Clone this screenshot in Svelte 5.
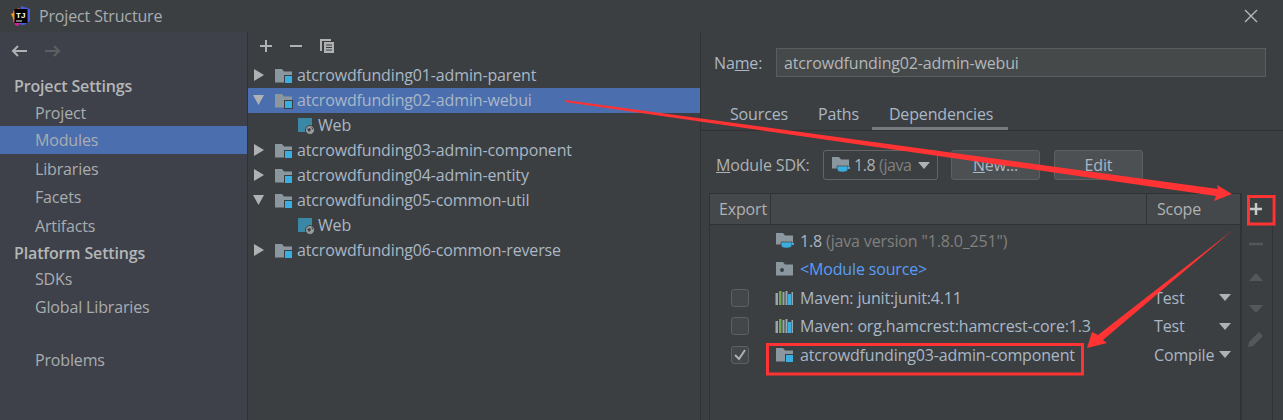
<script>
  const sidebar = [
    { t: 'Project Settings', h: 1, ht: 26, gap: 5 },
    { t: 'Project', ht: 27 },
    { t: 'Modules', sel: 1, ht: 28 },
    { t: 'Libraries', ht: 29 },
    { t: 'Facets', ht: 28 },
    { t: 'Artifacts', ht: 29 },
    { t: 'Platform Settings', h: 1, ht: 25 },
    { t: 'SDKs', ht: 28 },
    { t: 'Global Libraries', ht: 28 },
    { t: 'Problems', ht: 28, gap: 25 }
  ];
  const tree = [
    { t: 'atcrowdfunding01-admin-parent', a: 'r' },
    { t: 'atcrowdfunding02-admin-webui', a: 'd', sel: 1 },
    { t: 'Web', web: 1 },
    { t: 'atcrowdfunding03-admin-component', a: 'r' },
    { t: 'atcrowdfunding04-admin-entity', a: 'r' },
    { t: 'atcrowdfunding05-common-util', a: 'd' },
    { t: 'Web', web: 1 },
    { t: 'atcrowdfunding06-common-reverse', a: 'r' }
  ];
</script>

{#snippet folder()}
  <svg class="ic" width="20" height="18" viewBox="0 0 20 18">
    <path d="M1 2h7l2 2.500h8v11H1z" fill="#8a979f"/>
    <rect x="10.500" y="8.500" width="8" height="8" fill="#3aaee0" stroke="#3c3f41" stroke-width="1"/>
  </svg>
{/snippet}
{#snippet sdk()}
  <svg class="ic" width="20" height="18" viewBox="0 0 20 18">
    <path d="M1 1h7l2 2.500h8v9H1z" fill="#8a979f"/>
    <path d="M6 10h11v2.500q0 3.500-4 3.500h-3q-4 0-4-3.500z" fill="#3aaee0" stroke="#3c3f41" stroke-width=".7"/>
    <path d="M17 11h2v2h-2z" fill="#3aaee0"/>
  </svg>
{/snippet}
{#snippet maven()}
  <svg class="ic" width="20" height="18" viewBox="0 0 20 18">
    <rect x="0.500" y="4" width="2.500" height="12" fill="#9aa5aa"/>
    <rect x="4" y="2" width="2.500" height="14" fill="#6ba84f"/>
    <rect x="7.500" y="3" width="2" height="13" fill="#9aa5aa"/>
    <rect x="10.500" y="2" width="2" height="14" fill="#9aa5aa"/>
    <rect x="13" y="5" width="3" height="11" fill="#3aaee0"/>
    <rect x="16.500" y="3" width="1.500" height="13" fill="#9aa5aa"/>
  </svg>
{/snippet}
{#snippet caret()}
  <svg class="caret" width="12" height="7" viewBox="0 0 12 7"><path d="M0 0h12L6 7z" fill="#afb1b3"/></svg>
{/snippet}

<div class="win">
  <header class="title">
    <svg width="22" height="22" viewBox="0 0 22 22">
      <path d="M3 6l6-3 3 3-4 13-5-2z" fill="#f0503a"/>
      <path d="M11 1l9 3v12l-6 4-6-1z" fill="#4a5ae0"/>
      <path d="M1 9l4-2 3 8-3 2z" fill="#f89a1c"/>
      <path d="M4 15l7 2-3 4-3-1z" fill="#d81e8e"/>
      <rect x="4.500" y="4" width="13" height="14" fill="#000"/>
      <rect x="6" y="15.500" width="6" height="1" fill="#eee"/>
      <text x="6" y="12.500" class="tj">TJ</text>
    </svg>
    <span>Project Structure</span>
    <svg class="close" width="14" height="14" viewBox="0 0 14 14"><path d="M1 1l12 12M13 1L1 13" stroke="#b9bcbe" stroke-width="1.300"/></svg>
  </header>
  <div class="main">
    <nav class="side">
      <div class="hist">
        <svg width="17" height="12" viewBox="0 0 17 12"><path d="M16 6H2M7 1L2 6l5 5" fill="none" stroke="#afb1b3" stroke-width="2"/></svg>
        <svg width="17" height="12" viewBox="0 0 17 12"><path d="M1 6h14M10 1l5 5-5 5" fill="none" stroke="#5d6063" stroke-width="2"/></svg>
      </div>
      {#each sidebar as s}
        <div class="item" class:head={s.h} class:sel={s.sel} style="height:{s.ht}px;margin-top:{s.gap || 0}px">{s.t}</div>
      {/each}
    </nav>
    <section class="tree">
      <div class="tools">
        <svg width="14" height="14" viewBox="0 0 14 14"><path d="M7 1v12M1 7h12" stroke="#afb1b3" stroke-width="2"/></svg>
        <svg width="14" height="14" viewBox="0 0 14 14"><path d="M1 7h12" stroke="#afb1b3" stroke-width="2"/></svg>
        <svg width="16" height="16" viewBox="0 0 16 16"><path d="M1 1h11v2H3v10H1z" fill="#afb1b3"/><path d="M5 4h10v11H5z" fill="#afb1b3"/><path d="M7 7h6M7 9.500h6M7 12h6" stroke="#3c3f41"/></svg>
      </div>
      {#each tree as n}
        <div class="node" class:sel={n.sel} class:web={n.web}>
          {#if n.a === 'r'}
            <svg class="ar" width="12" height="14" viewBox="0 0 12 14"><path d="M1 1l10 6-10 6z" fill="#afb1b3"/></svg>
          {:else if n.a === 'd'}
            <svg class="ar" width="12" height="14" viewBox="0 0 12 14"><path d="M0 2h11L5.500 12z" fill="#afb1b3"/></svg>
          {/if}
          {#if n.web}
            <svg class="ic" width="18" height="18" viewBox="0 0 18 18">
              <rect x="1" y="1" width="14" height="14" fill="#3a87a6"/>
              <circle cx="13" cy="13" r="4.500" fill="#9a9da0" stroke="#3c3f41"/>
              <path d="M10 12l3-1 1 2-2 2zM14 10l2 1v2z" fill="#3c3f41"/>
            </svg>
          {:else}
            {@render folder()}
          {/if}
          <span>{n.t}</span>
        </div>
      {/each}
    </section>
    <section class="detail">
      <div class="name">
        <label for="mod">Na<u>m</u>e:</label>
        <input id="mod" value="atcrowdfunding02-admin-webui" />
      </div>
      <div class="tabs">
        <span class="t1">Sources</span><span class="t2">Paths</span><span class="on">Dependencies</span>
      </div>
      <div class="sdk">
        <span class="lbl"><u>M</u>odule SDK:</span>
        <div class="combo">{@render sdk()}<span class="v">1.8 <i>(java</i></span>{@render caret()}</div>
        <button class="new"><u>N</u>ew...</button>
        <button class="edit">Edit</button>
      </div>
      <div class="deps">
        <div class="table">
          <div class="thead"><span class="c1">Export</span><span class="c2"></span><span class="c3">Scope</span></div>
          <div class="row"><span class="chk none"></span>{@render sdk()}<span class="txt">1.8 <i>(java version "1.8.0_251")</i></span></div>
          <div class="row"><span class="chk none"></span>
            <svg class="ic" width="20" height="18" viewBox="0 0 20 18"><path d="M1 2h7l2 2.500h8v11H1z" fill="#8a979f"/><circle cx="7" cy="10" r="2" fill="#3c3f41"/></svg>
            <span class="txt link">&lt;Module source&gt;</span></div>
          <div class="row"><span class="chk"></span>{@render maven()}<span class="txt">Maven: junit:junit:4.11</span><span class="scope">Test</span>{@render caret()}</div>
          <div class="row"><span class="chk"></span>{@render maven()}<span class="txt">Maven: org.hamcrest:hamcrest-core:1.3</span><span class="scope">Test</span>{@render caret()}</div>
          <div class="row"><span class="chk on"><svg width="14" height="12" viewBox="0 0 14 12"><path d="M2 6l4 4 6-9" fill="none" stroke="#afb1b3" stroke-width="2"/></svg></span>{@render folder()}<span class="txt">atcrowdfunding03-admin-component</span><span class="scope">Compile</span>{@render caret()}</div>
        </div>
        <div class="acts">
          <svg width="16" height="16" viewBox="0 0 16 16"><path d="M8 2v12M2 8h12" stroke="#c6c8c9" stroke-width="2.500"/></svg>
          <svg width="14" height="4" viewBox="0 0 14 4"><path d="M0 2h14" stroke="#55585a" stroke-width="2.500"/></svg>
          <svg width="14" height="8" viewBox="0 0 14 8"><path d="M7 0l7 8H0z" fill="#55585a"/></svg>
          <svg width="14" height="8" viewBox="0 0 14 8"><path d="M0 0h14L7 8z" fill="#55585a"/></svg>
          <svg width="18" height="18" viewBox="0 0 18 18"><path d="M1 17l1-5L12 2l4 4L6 16z" fill="#55585a"/></svg>
        </div>
      </div>
    </section>
  </div>
  <svg class="over" width="1283" height="420" viewBox="0 0 1283 420">
    <path d="M565 100L1218 189 1217 185 1232 194 1214 201 1216 196 565 102z" fill="#f33"/>
    <path d="M1233 230L1098 335 1092 332 1087 348 1107 343 1103 340z" fill="#f33"/>
    <rect x="1248.500" y="196.500" width="25.500" height="27.500" fill="none" stroke="#f33" stroke-width="3"/>
    <rect x="767.500" y="344.500" width="315" height="29.500" fill="none" stroke="#f33" stroke-width="3"/>
  </svg>
</div>

<style>
  :global(body) { margin: 0; background: #3c3f41; }
  .win {
    position: relative; width: 1283px; height: 420px; overflow: hidden;
    background: #3c3f41; color: #afb1b3;
    font: 16px "Open Sans", "Noto Sans", sans-serif;
    letter-spacing: -0.15px;
  }
  .title { height: 32px; display: flex; align-items: center; padding-left: 10px; gap: 7px; box-sizing: border-box; }
  .title span { flex: 1; color: #a9adb0; }
  .tj { font: bold 8px "Liberation Sans", sans-serif; fill: #fff; letter-spacing: 0; }
  .close { margin-right: 25px; }
  .main { display: flex; height: 388px; }
  .side { width: 247px; flex: none; background: #3e4149; border-right: 1px solid #323232; }
  .hist { height: 36px; display: flex; align-items: center; gap: 16px; padding: 2px 0 0 11px; box-sizing: border-box; }
  .item { display: flex; align-items: center; padding-left: 35px; color: #a9adb0; }
  .item.head { padding-left: 14px; font-weight: 600; color: #b4b6b8; }
  .item.sel { background: #4b6eaf; }
  .tree { width: 452px; flex: none; border-right: 1px solid #323232; }
  .tools { height: 30px; display: flex; align-items: center; gap: 16px; padding: 0 0 2px 11px; box-sizing: border-box; margin-bottom: 1px; }
  .node { height: 25px; display: flex; align-items: center; padding-left: 26px; position: relative; color: #a9b7c6; }
  .node span { position: relative; top: -1px; }
  .node.sel { background: #4b6eaf; }
  .node.web { padding-left: 49px; }
  .node .ic { margin-right: 3px; }
  .ar { position: absolute; left: 5px; top: 5px; }
  .detail { flex: 1; padding: 16px 0 0 13px; min-width: 0; display: flex; flex-direction: column; }
  .name { display: flex; align-items: center; height: 29px; padding-right: 17px; }
  .name label { width: 62px; color: #a9b7c6; }
  input {
    flex: 1; min-width: 0; height: 29px; box-sizing: border-box; padding: 0 7px;
    background: #45494a; border: 1px solid #5a5d5f; color: #b4b7b9; font: inherit; letter-spacing: inherit; outline: none;
  }
  .tabs { height: 31px; margin: 22px 0 0 -13px; display: flex; align-items: flex-start; padding-left: 14px; border-bottom: 1px solid #323232; box-sizing: content-box; }
  .tabs span { padding: 4px 15px 0; height: 24px; color: #a9b7c6; }
  .tabs .t2 { padding-right: 13px; }
  .tabs .on { border-bottom: 3px solid #747a80; height: 24px; padding-left: 17px; }
  .sdk { display: flex; align-items: center; height: 30px; margin: 19px 0 0 2px; }
  .lbl { width: 107px; flex: none; }
  .combo {
    width: 115px; height: 30px; box-sizing: border-box; border: 1px solid #646464; border-radius: 3px;
    display: flex; align-items: center; padding-left: 7px; gap: 3px; overflow: hidden; flex: none;
  }
  .combo .v { white-space: nowrap; letter-spacing: -0.4px; }
  .combo .caret { margin-left: auto; margin-right: 7px; }
  i { font-style: normal; color: #808080; }
  button {
    height: 30px; width: 89px; box-sizing: border-box; background: #4c5052; border: 1px solid #5e6060; border-radius: 3px;
    color: #a9b7c6; font: inherit; letter-spacing: inherit; padding: 0;
  }
  .new { margin-left: 13px; }
  .edit { margin-left: 14px; }
  .deps { display: flex; margin: 13px 0 0 -5px; flex: 1; }
  .table { width: 532px; border: 1px solid #323232; border-bottom: 0; box-sizing: border-box; }
  .thead { height: 30px; display: flex; align-items: center; background: #45484a; border-bottom: 1px solid #323232; box-sizing: content-box; }
  .c1 { width: 61px; box-sizing: border-box; padding-left: 9px; height: 100%; display: flex; align-items: center; border-right: 1px solid #323232; }
  .c2 { flex: 1; height: 100%; border-right: 1px solid #323232; }
  .c3 { width: 93px; padding-left: 10px; box-sizing: border-box; }
  .row { height: 28.500px; display: flex; align-items: center; padding-left: 21px; position: relative; top: 1.500px; }
  .chk { width: 16px; height: 16px; border: 1px solid #5e6060; border-radius: 3px; background: #43474a; margin-right: 26px; display: flex; align-items: center; justify-content: center; flex: none; }
  .chk.none { visibility: hidden; }
  .row .ic { margin-right: 5px; flex: none; }
  .txt { flex: 1; color: #a9b7c6; white-space: nowrap; }
  .link { color: #589df6; }
  .scope { width: 65px; flex: none; color: #a9b7c6; }
  .caret { margin-right: 9px; flex: none; }
  .acts { width: 32px; border-left: 1px solid #323232; border-right: 1px solid #323232; display: flex; flex-direction: column; align-items: center; padding-top: 8px; box-sizing: border-box; padding-right: 2px; }
  .acts svg:nth-child(1) { margin-bottom: 25px; }
  .acts svg:nth-child(2) { margin-bottom: 27px; }
  .acts svg:nth-child(3) { margin-bottom: 24px; }
  .acts svg:nth-child(4) { margin-bottom: 17px; }
  .over { position: absolute; left: 0; top: 0; pointer-events: none; }
</style>
